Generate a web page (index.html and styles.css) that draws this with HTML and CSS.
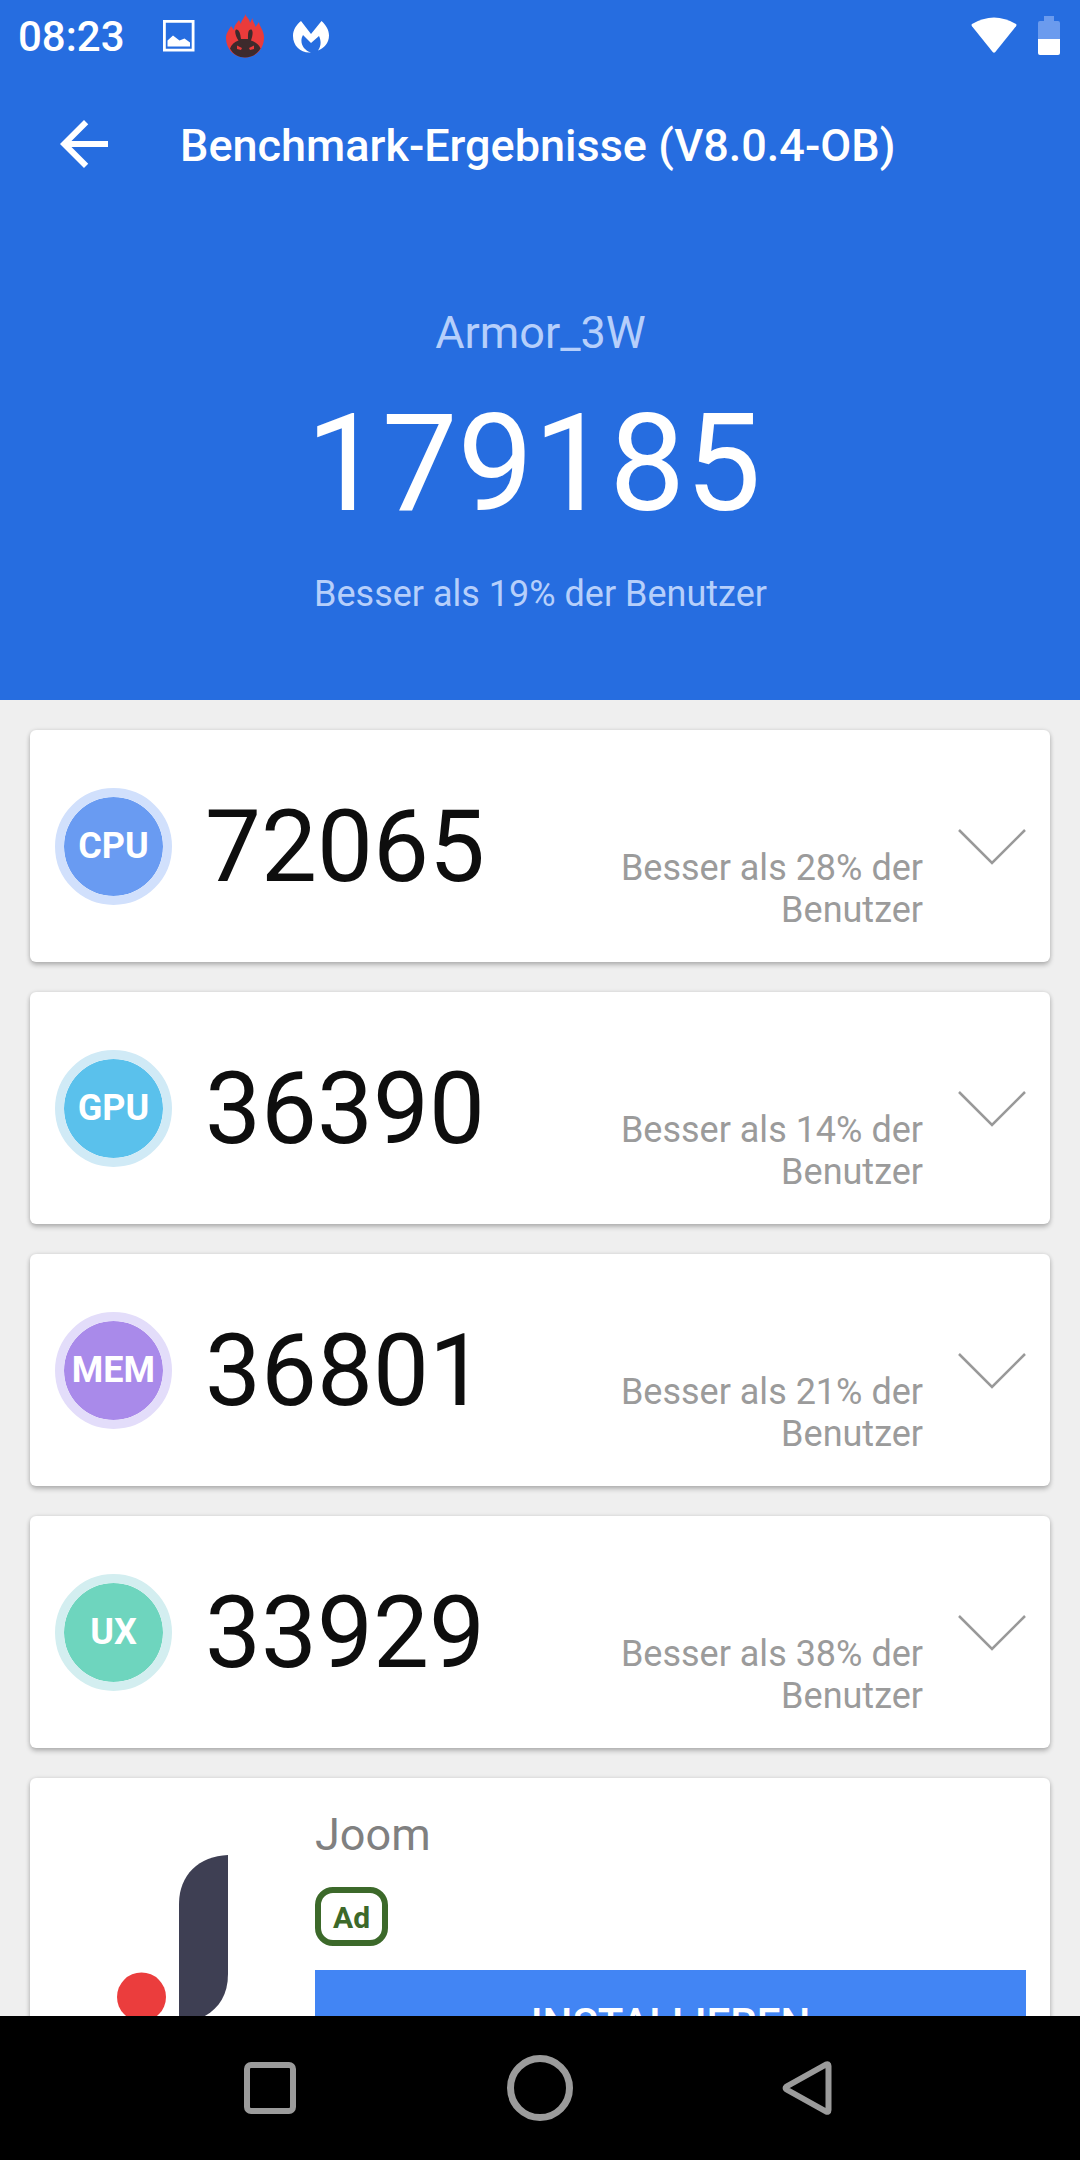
FILE: index.html
```html
<!DOCTYPE html>
<html lang="de">
<head>
<meta charset="utf-8">
<title>Benchmark-Ergebnisse</title>
<link rel="stylesheet" href="styles.css">
</head>
<body>
<div class="screen">
  <header class="hero">
    <div class="status">
      <span class="time">08:23</span>
      <svg class="s-image" viewBox="0 0 32 32"><path d="M1.400 1.400H30.100V30.100H1.400z" fill="none" stroke="#fff" stroke-width="2.800"/><path d="M4.500 26.500V20.500l5.500-5 6.500 5 5-2 5.500 4v4z" fill="#fff"/></svg>
      <svg class="s-antutu" viewBox="0 0 40 44"><path d="M20.500 0c0 3 4 4 4.500 9l2.500-5c0 4 2.500 5 3 9l3.500-5c0 4 5 8 5 15.500C39 35 31 43.500 20 43.500S1 35 1 24c0-5 3-8 5-12l3 4c0-5 3-7 5-10l2 4c0-4 3-5 4.500-10z" fill="#ea3b3b"/><path d="M13.500 26.500C11 23 9 17 11 15.500c3-.500 4.500 4 5 9.500h7C23 19 23 15 26.500 15.500c2 2 1 7-.5 11 4 1.500 8 4 9.500 8C32 40.500 26 43.500 20 43.500S8 40.500 5 34.500c1.500-4 4.500-6.500 8.500-8z" fill="#3d2a2c"/><path d="M12 31.500l5 2.500-1 2-4-1zM29 31.500l-5 2.500 1 2 4-1z" fill="#ea3b3b"/></svg>
      <svg class="s-mb" viewBox="0 0 36 32"><path d="M8 0l10 13L28.500 0C33 4 36 9 36 14.500 36 22 31 27 25 29.500c3-4.500 3.500-9 1-14.500l-8 7-8-8c-4 7 0 15 8 17.500C8 32.500 0 25 0 15 0 9 3 4 8 0z" fill="#fff"/></svg>
      <svg class="s-wifi" viewBox="0 0 46 36"><path d="M1 7Q23-6 45 7Q46 8 45 9.300L24.300 35Q23 36.400 21.700 35L1 9.300Q0 8 1 7z" fill="#fff"/></svg>
      <svg class="s-battery" viewBox="0 0 22 39"><path d="M6 0h10v5h4q2 0 2 2v16H0V7q0-2 2-2h4z" fill="#6b9bee"/><path d="M0 23h22v14q0 2-2 2H2q-2 0-2-2z" fill="#fff"/></svg>
    </div>
    <div class="toolbar">
      <svg class="back" viewBox="0 0 24 24"><path d="M20 11H7.830l5.590-5.590L12 4l-8 8 8 8 1.410-1.410L7.830 13H20v-2z" fill="#fff"/></svg>
      <h1 class="title">Benchmark-Ergebnisse (V8.0.4-OB)</h1>
    </div>
    <div class="device">Armor_3W</div>
    <div class="total">179185</div>
    <div class="rank">Besser als 19% der Benutzer</div>
  </header>
  <main class="list">
    <section class="card">
      <span class="badge cpu">CPU</span>
      <span class="score">72065</span>
      <span class="compare">Besser als 28% der Benutzer</span>
      <svg class="chevron" viewBox="0 0 68 36"><path d="M1 1L34 34 67 1"/></svg>
    </section>
    <section class="card">
      <span class="badge gpu">GPU</span>
      <span class="score">36390</span>
      <span class="compare">Besser als 14% der Benutzer</span>
      <svg class="chevron" viewBox="0 0 68 36"><path d="M1 1L34 34 67 1"/></svg>
    </section>
    <section class="card">
      <span class="badge mem">MEM</span>
      <span class="score">36801</span>
      <span class="compare">Besser als 21% der Benutzer</span>
      <svg class="chevron" viewBox="0 0 68 36"><path d="M1 1L34 34 67 1"/></svg>
    </section>
    <section class="card">
      <span class="badge ux">UX</span>
      <span class="score">33929</span>
      <span class="compare">Besser als 38% der Benutzer</span>
      <svg class="chevron" viewBox="0 0 68 36"><path d="M1 1L34 34 67 1"/></svg>
    </section>
    <section class="card ad">
      <svg class="ad-logo" viewBox="0 0 112 170"><path d="M111 0V119C111 142 100 156 82 164L62 172V49C62 20 82 1 111 0z" fill="#3e3f53"/><circle cx="24.500" cy="142" r="24.500" fill="#eb3d3d"/></svg>
      <div class="ad-body">
        <div class="ad-name">Joom</div>
        <span class="ad-tag">Ad</span>
        <div class="ad-button">INSTALLIEREN</div>
      </div>
    </section>
  </main>
  <nav class="navbar">
    <svg viewBox="0 0 72 72"><rect x="13" y="13" width="46" height="46" rx="4"/></svg>
    <svg viewBox="0 0 72 72"><circle cx="36" cy="36" r="29.500" stroke-width="7"/></svg>
    <svg viewBox="0 0 72 72"><path d="M12.500 34.500L52 12.500q2.500-1 2.500 1.500v44q0 2.500-2.500 1.500L12.500 37.500q-1.500-1.500 0-3z" stroke-linejoin="round"/></svg>
  </nav>
</div>
</body>
</html>
```
FILE: styles.css
```css
* { box-sizing: border-box; }
body { margin: 0; font-family: Roboto, "Liberation Sans", sans-serif; background: #efefef; }
svg { display: block; flex: none; }
.screen { width: 1080px; height: 2160px; display: flex; flex-direction: column; overflow: hidden; background: #efefef; }

.hero { flex: none; height: 700px; background: #266de0; color: #fff; display: flex; flex-direction: column; }
.status { height: 72px; display: flex; align-items: flex-start; padding-left: 18px; padding-right: 20px; }
.time { width: 145px; font-size: 42px; font-weight: 500; line-height: 74px; }
.s-image { width: 32px; height: 32px; margin-top: 20px; }
.s-antutu { width: 40px; height: 44px; margin: 14px 0 0 30px; }
.s-mb { width: 36px; height: 32px; margin: 21px 0 0 28px; }
.s-wifi { width: 46px; height: 36px; margin: 17px 21px 0 auto; }
.s-battery { width: 22px; height: 39px; margin-top: 16px; }

.toolbar { height: 144px; display: flex; align-items: center; padding-left: 48px; }
.back { width: 72px; height: 72px; }
.title { margin: 3px 0 0 60px; font-size: 45px; font-weight: 500; line-height: 60px; }
.device { margin-top: 87px; padding-left: 1px; font-size: 45px; line-height: 60px; text-align: center; color: #b6cffb; }
.total { margin-top: 21px; padding-right: 13px; font-size: 135px; line-height: 160px; text-align: center; }
.rank { margin-top: 24px; padding-left: 1px; font-size: 36px; line-height: 52px; text-align: center; color: #b6cffb; }

.list { flex: 1; min-height: 0; overflow: hidden; padding: 30px 30px 0; display: flex; flex-direction: column; gap: 30px; }
.card { flex: none; height: 232px; display: flex; align-items: center; padding: 0 24px 0 25px; background: #fff; border-radius: 6px; box-shadow: 0 3px 5px rgba(0,0,0,.24), 0 0 4px rgba(0,0,0,.1); }
.badge { flex: none; width: 117px; height: 117px; border: 9px solid; border-radius: 50%; background-clip: padding-box; color: #fff; font-size: 36px; font-weight: 700; line-height: 99px; display: flex; justify-content: center; }
.cpu { background-color: #699bf2; border-color: #d1e0fc; }
.gpu { background-color: #5ac1ec; border-color: #d0eaf6; }
.mem { background-color: #a98aea; border-color: #e3ddfa; }
.ux { background-color: #6ed5be; border-color: #d3eef0; }
.score { margin: 1px 0 0 33px; font-size: 99.6px; line-height: 120px; color: #0e0e0e; }
.compare { width: 310px; margin: 85px 35px 0 auto; font-size: 36px; line-height: 42px; text-align: right; color: #9b9b9b; }
.chevron { width: 68px; height: 36px; margin-top: 1px; fill: none; stroke: #999; stroke-width: 2.5; }

.ad { height: 320px; align-items: flex-start; padding-left: 87px; }
.ad-logo { width: 112px; height: 170px; margin-top: 77px; }
.ad-body { flex: 1; margin-left: 86px; padding-top: 27px; display: flex; flex-direction: column; align-items: flex-start; }
.ad-name { font-size: 45px; line-height: 60px; color: #808080; }
.ad-tag { width: 73px; height: 59px; margin-top: 22px; border: 6px solid #3c692a; border-radius: 18px; color: #3c692a; font-size: 30px; font-weight: 700; line-height: 49px; text-align: center; }
.ad-button { align-self: stretch; height: 108px; margin-top: 24px; background: #4285f4; color: #fff; font-size: 42px; font-weight: 500; line-height: 108px; text-align: center; }

.navbar { flex: none; height: 144px; background: #000; display: flex; justify-content: center; align-items: center; gap: 198px; }
.navbar svg { width: 72px; height: 72px; fill: none; stroke: #9b9b9b; stroke-width: 6; }
```
